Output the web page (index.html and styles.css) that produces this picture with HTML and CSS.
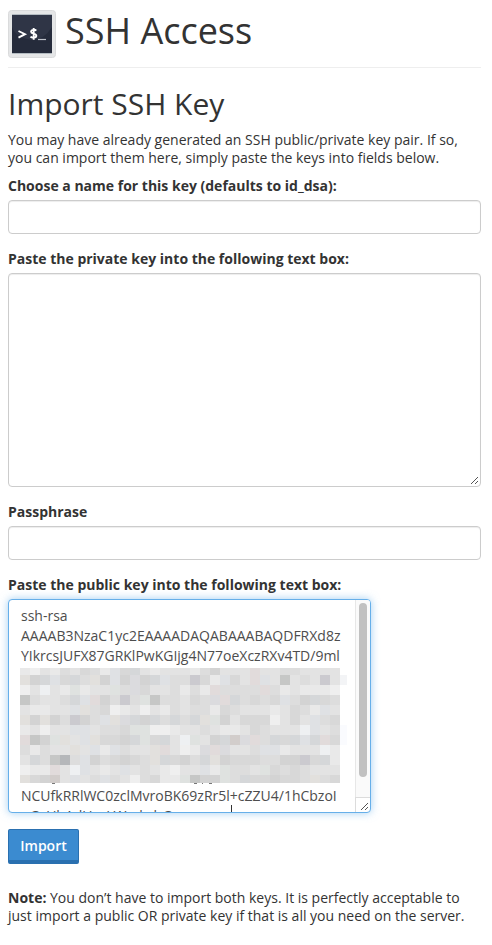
FILE: index.html
```html
<!DOCTYPE html>
<html lang="en">
<head>
<meta charset="utf-8">
<title>SSH Access</title>
<link rel="stylesheet" href="styles.css">
</head>
<body>
<header class="page-header">
  <svg class="app-icon" width="48" height="48" viewBox="0 0 48 48" aria-hidden="true">
    <rect x=".5" y=".5" width="47" height="47" rx="3" fill="#e5e6e7" stroke="#dadbdc"/>
    <rect x="4" y="4" width="40" height="40" fill="#252b3b"/>
    <path d="M4 4h40v13Q36 30 24 30Q8 28 4 17z" fill="#2f3546"/>
    <path d="M4 4.5h40M4 43.5h40" stroke="#b4bcc2"/>
    <path d="M10.5 21l6.5 3.2-6.5 3.4" fill="none" stroke="#fff" stroke-width="1.9"/>
    <path d="M28.3 20.6c-1.2-1.2-5.2-1.2-5.2 1.1 0 2.4 5.2 1.4 5.2 4.1 0 2.5-4.4 2.4-5.8.8M25.7 18v11.8" fill="none" stroke="#fff" stroke-width="1.9"/>
    <path d="M30 29.5h8" stroke="#bdc1c9" stroke-width="1.2"/>
  </svg>
  <h1>SSH Access</h1>
</header>
<main>
  <h2>Import SSH Key</h2>
  <p class="intro">You may have already generated an SSH public/private key pair. If so,<br>you can import them here, simply paste the keys into fields below.</p>
  <form>
    <label for="name">Choose a name for this key (defaults to id_dsa):</label>
    <input class="control" id="name" type="text">
    <label for="private">Paste the private key into the following text box:</label>
    <div class="control private-key" id="private"><svg class="grip" width="9" height="9" viewBox="0 0 9 9"><path d="M1 8L8 1M5 8L8 5"/></svg></div>
    <label for="pass">Passphrase</label>
    <input class="control" id="pass" type="text">
    <label for="public">Paste the public key into the following text box:</label>
    <div class="control public-key" id="public">
      <div class="key-text">
        <div>ssh-rsa</div>
        <div>AAAAB3NzaC1yc2EAAAADAQABAAABAQDFRXd8z</div>
        <div>YIkrcsJUFX87GRKlPwKGIjg4N77oeXczRXv4TD/9ml</div>
        <svg class="redacted" id="redacted" width="328" height="120" viewBox="0 0 328 120" shape-rendering="crispEdges"></svg>
        <div>NCUfkRRlWC0zclMvroBK69zRr5l+cZZU4/1hCbzoI</div>
        <div class="last-line"><span>oGzUhAdUzvLWmbrbGz</span><span class="caret"></span></div>
      </div>
      <div class="scrollbar"><div class="track"><div class="thumb"></div></div><div class="corner"><svg class="grip" width="9" height="9" viewBox="0 0 9 9"><path d="M1 8L8 1M5 8L8 5"/></svg></div></div>
    </div>
    <button type="button">Import</button>
  </form>
  <p class="note"><strong>Note:</strong> You don’t have to import both keys. It is perfectly acceptable to<br>just import a public OR private key if that is all you need on the server.</p>
</main>
<script src="redact.js"></script>
</body>
</html>
```
FILE: styles.css
```css
* { box-sizing: border-box; }
body {
  margin: 0;
  padding: 10px 11px 0 8px;
  background: #fff;
  color: #333;
  font: 14px/18px "Open Sans", sans-serif;
}
.page-header {
  display: flex;
  height: 58px;
  border-bottom: 1px solid #eee;
}
.app-icon { flex: none; }
h1, h2 { margin: 0; font-weight: 400; white-space: nowrap; }
h1 { margin-left: 9px; font-size: 36px; line-height: 42px; }
h2 { margin-top: 18px; font-size: 30px; line-height: 36px; }
p { margin: 0; white-space: nowrap; }
.intro { margin-top: 9px; }
form { display: flex; flex-direction: column; align-items: flex-start; }
label { margin: 10px 0 5px; font-weight: 700; }
.control {
  display: block;
  width: 473px;
  height: 34px;
  margin: 0 0 6px;
  padding: 6px 12px;
  border: 1px solid #ccc;
  border-radius: 4px;
  background: #fff;
  box-shadow: inset 0 1px 1px rgba(0, 0, 0, .075);
  color: #555;
  font: inherit;
}
.private-key {
  display: flex;
  align-items: flex-end;
  justify-content: flex-end;
  height: 214px;
  padding: 1px;
}
.grip { display: block; fill: none; stroke: #555; stroke-width: 1; }
.public-key {
  display: flex;
  width: 363px;
  height: 214px;
  margin-bottom: 16px;
  padding: 0;
  overflow: hidden;
  border-color: #66afe9;
  box-shadow: 0 0 8px rgba(102, 175, 233, .6);
}
.key-text {
  flex: 1;
  min-width: 0;
  padding: 6px 0 0 12px;
  color: #4d4d4d;
  line-height: 20px;
  white-space: nowrap;
}
.redacted { display: block; margin-left: -1px; }
.last-line { display: flex; }
.last-line span:first-child { width: 210px; }
.caret { width: 1px; height: 20px; margin-top: -1px; background: #333; }
.scrollbar { display: flex; flex: none; flex-direction: column; width: 15px; }
.track { flex: 1; padding: 3px 3px 0; border-left: 1px solid #e7e7e7; background: #fafafa; }
.thumb { width: 8px; height: 174px; border-radius: 4px; background: #c1c1c1; }
.corner {
  display: flex;
  align-items: flex-end;
  justify-content: flex-end;
  height: 15px;
  padding: 1px;
  border: solid #dcdcdc;
  border-width: 1px 0 0 1px;
}
button {
  width: 71px;
  height: 35px;
  padding: 2px 0 0;
  border: 1px solid #2a70b0;
  border-bottom-width: 4px;
  border-radius: 2px;
  background: #3b8bd0;
  color: #fff;
  font: 600 14px/20px "Open Sans", sans-serif;
}
.note { margin-top: 25px; }
```
FILE: redact.js
```js
// Each character names the colour of one cell of the redaction mosaic.
const colors = {
  a: '#efefef', b: '#e9e9e9', c: '#e3e3e3', d: '#dddddd', e: '#d8d8d8',
  f: '#d3d3d3', g: '#c6c7c6', h: '#b5b7ba', p: '#e1dbdb', q: '#dfe1e4',
  r: '#dfe2e0', y: '#e2e0dd', w: '#eef0f2', v: '#cbcacf', t: '#d5d7d9',
  k: '#d2cdcb', u: '#dbdbde'
};
const cells = [
  'bacbdcedbqetcbcc' + 'cbdfcccpccddcccc',
  'yftqetdyfqfuftqd' + 'dvebqecpqcgcdcvc',
  'acwcbrbccrdueccd' + 'bdbpddddpdbcbbba',
  'gdccdtqpfdvdrgdd' + 'ceduptdedeqdfted',
  'cbbccqydeabcacbd' + 'cddbedcccbcedbqc',
  'yfyfdvfdqyutftdt' + 'dtyrfceeeacecqde',
  'bcaccqqcdderraab' + 'ccdcbbcedcccwqcd',
  'pgfrycqyeeftretc' + 'wrcftkupdtetqtpe',
  'dbdccycqbqdccypc' + 'abupuccdqqbcccwb',
  'ctdghdqfdefedyte' + 'fdtyfeeeddffvetb',
  'abbpcwqcbcqcdcba' + 'ccqbrddcrededccc',
  'yefkcqcdqdcadebb' + 'rgffrdteefeedyde'
];
const svg = document.getElementById('redacted');
function rect(x, y, w, h, fill) {
  const el = document.createElementNS('http://www.w3.org/2000/svg', 'rect');
  Object.entries({ x, y, width: w, height: h, fill }).forEach(([k, v]) => el.setAttribute(k, v));
  svg.appendChild(el);
}
// The first and last rows are clipped by the redacted area.
cells.forEach((row, r) => {
  const y = r === 0 ? 2 : 9 + (r - 1) * 10;
  const h = r === 0 ? 7 : r === 11 ? 8 : 10;
  [...row].forEach((c, i) => rect(i * 10, y, 10, h, colors[c]));
});
rect(320, 9, 7, 10, '#f3f4f6');
rect(320, 59, 7, 20, '#fafbfe');
[[32, 3], [174, 3], [182, 1], [189, 3]].forEach(([x, w]) => rect(x, 117, w, 1, '#777'));
```
